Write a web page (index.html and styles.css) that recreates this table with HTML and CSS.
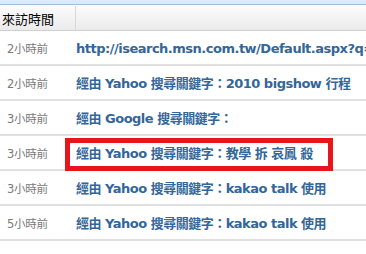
FILE: index.html
```html
<!DOCTYPE html>
<html>
<head>
<meta charset="utf-8">
<link rel="stylesheet" href="styles.css">
</head>
<body>
<div class="page">
  <div class="topband"></div>
  <table class="log">
    <thead>
      <tr><th class="c-time">來訪時間</th><th class="c-src"></th></tr>
    </thead>
    <tbody>
      <tr><td class="c-time">2小時前</td><td class="c-src"><a>http://isearch.msn.com.tw/Default.aspx?q=</a></td></tr>
      <tr><td class="c-time">2小時前</td><td class="c-src"><a>經由 Yahoo 搜尋關鍵字：2010 bigshow 行程</a></td></tr>
      <tr><td class="c-time">3小時前</td><td class="c-src"><a>經由 Google 搜尋關鍵字：</a></td></tr>
      <tr><td class="c-time">3小時前</td><td class="c-src"><a>經由 Yahoo 搜尋關鍵字：教學 拆 哀鳳 殺</a></td></tr>
      <tr><td class="c-time">3小時前</td><td class="c-src"><a>經由 Yahoo 搜尋關鍵字：kakao talk 使用</a></td></tr>
      <tr><td class="c-time">5小時前</td><td class="c-src"><a>經由 Yahoo 搜尋關鍵字：kakao talk 使用</a></td></tr>
    </tbody>
  </table>
  <div class="highlight"></div>
</div>
</body>
</html>
```

FILE: styles.css
```css
html, body {
  margin: 0;
  padding: 0;
  background: #fff;
  overflow: hidden;
}
.page {
  position: relative;
  width: 366px;
  height: 254px;
  overflow: hidden;
}
.topband {
  height: 4px;
  background: #dfe8f6;
  border-bottom: 1px solid #a3bdd9;
}
.log {
  border-collapse: collapse;
  width: 480px;
  table-layout: fixed;
  margin-top: 1px;
}
.log th {
  height: 24px;
  padding: 0;
  background: linear-gradient(#fbfbfb, #ebebeb);
  border-bottom: 1px solid #d0d0d0;
  font: 13px "Noto Sans CJK TC", sans-serif;
  color: #000;
  text-align: left;
  font-weight: normal;
  vertical-align: middle;
}
.log th.c-time {
  width: 75px;
  padding-left: 2px;
  border-right: 1px solid #d8d8d8;
  box-sizing: border-box;
}
.log td {
  height: 33px;
  padding: 0;
  border-bottom: 2px solid #e0e0e0;
  vertical-align: middle;
  white-space: nowrap;
}
.log td.c-time {
  padding-left: 7px;
  font: 11.5px "DejaVu Sans", "Noto Sans CJK TC", sans-serif;
  color: #7a7a7a;
  letter-spacing: -0.3px;
}
.log td.c-src {
  padding-left: 1px;
}
.log td.c-src a {
  font: bold 13px "DejaVu Sans", "Noto Sans CJK TC", sans-serif;
  color: #336699;
  letter-spacing: -0.5px;
}
.highlight {
  position: absolute;
  left: 65px;
  top: 138px;
  width: 258px;
  height: 23px;
  border: 5px solid #e8141e;
}
```
